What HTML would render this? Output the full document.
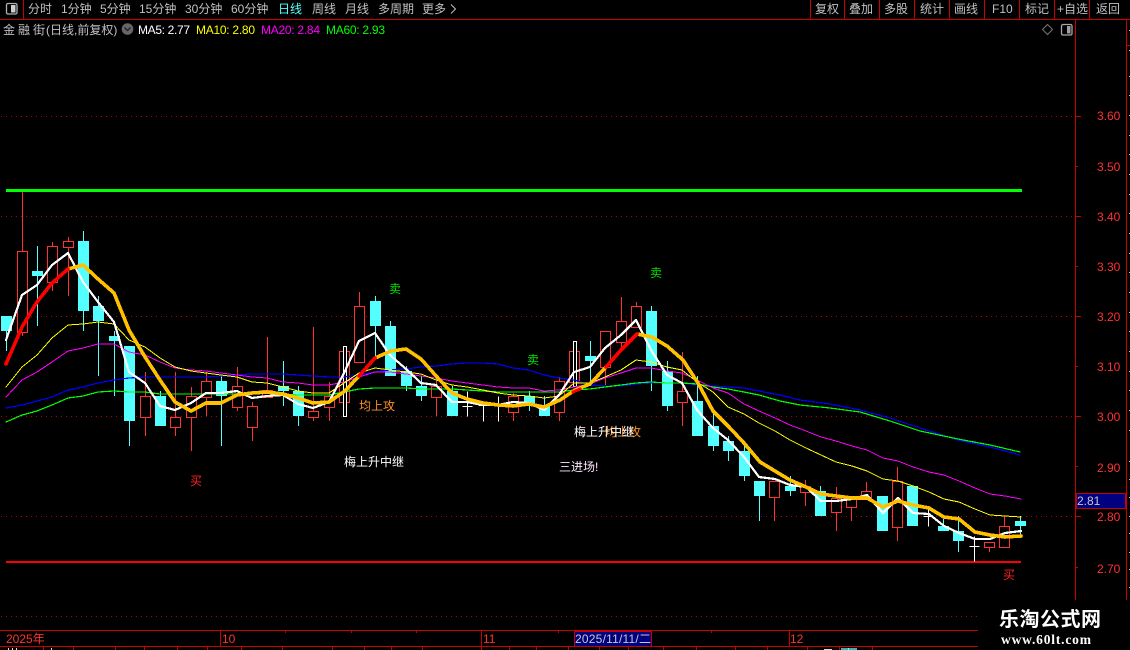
<!DOCTYPE html>
<html><head><meta charset="utf-8"><style>
html,body{margin:0;padding:0;background:#000;width:1130px;height:650px;overflow:hidden}
svg{display:block}
text{font-family:"Liberation Sans","WenQuanYi Zen Hei","Noto Sans CJK SC",sans-serif;font-size:12px}
.m{fill:#c0c0c0}
.a{fill:#ff3232}
</style></head><body>
<svg width="1130" height="650" viewBox="0 0 1130 650" xmlns="http://www.w3.org/2000/svg">
<rect width="1130" height="650" fill="#000"/>
<g shape-rendering="crispEdges">
<!-- grid -->
<g stroke="#b00000" stroke-width="1" stroke-dasharray="1 4" fill="none">
<path d="M1 116.5H1075M1 216.5H1075M1 316.5H1075M1 416.5H1075M1 516.5H1075M1 616.5H978"/>
</g>
<!-- frame -->
<g stroke="#c80000" stroke-width="1" fill="none">
<path d="M0 19.5H1130M23.5 0V19M810.5 0V19M844.5 0V19M879.5 0V19M914.5 0V19M949.5 0V19M984.5 0V19M1019.5 0V19M1054.5 0V19M1089.5 0V19"/>
<path d="M1075.5 20V600M1126.5 20V600M1126 45.5H1130"/>
<path d="M1076 116.5H1081M1076 166.5H1078M1076 216.5H1081M1076 266.5H1078M1076 316.5H1081M1076 366.5H1078M1076 416.5H1081M1076 466.5H1078M1076 516.5H1081M1076 567.5H1078"/>
<path d="M0 630.5H978M0 646.5H978M220.5 630V646M481.5 630V646M789.5 630V646M285.5 630V633M351.5 630V633M416.5 630V633M558.5 630V633M711.5 630V633"/>
<path d="M43.5 646V650M73.5 646V650M115.5 646V650M144.5 646V650M177.5 646V650M207.5 646V650M241.5 646V650M282.5 646V650M332.5 646V650M364.5 646V650M391.5 646V650M422.5 646V650M481.5 646V650M509.5 646V650M536.5 646V650M568.5 646V650M599.5 646V650M628.5 646V650M663.5 646V650M696.5 646V650M735.5 646V650M767.5 646V650M807.5 646V650M839.5 646V650M872.5 646V650"/>
</g>
<path d="M1129 30h1M1129 50h1M1129 76h1M1129 95h1M1129 115h1M1129 135h1M1129 154h1M1129 174h1M1129 194h1M1129 213h1M1129 233h1M1129 253h1M1129 272h1M1129 292h1M1129 312h1M1129 331h1M1129 351h1M1129 371h1M1129 390h1M1129 410h1M1129 430h1M1129 461h1M1129 479h1M1129 497h1M1129 516h1M1129 533h1M1129 552h1M1129 569h1M1129 587h1" stroke="#c0c0c0" stroke-width="1" transform="translate(0,.5)"/>
<path d="M8 648h1v2h-1zM12 648h1v2h-1zM16 648h1v2h-1zM51 648h1v2h-1zM824 649h8v1h-8zM848 648h1v2h-1z" fill="#ddd"/>
<path d="M841 648h16v2h-16z" fill="#54ffff" opacity=".7"/>

<!-- horizontal levels -->
<rect x="6" y="189" width="1016" height="3" fill="#00ff00"/>
<rect x="6" y="561" width="1015" height="2" fill="#ff0000"/>

<!-- red wicks -->
<path stroke="#ff3232" stroke-width="1" fill="none" transform="translate(.5,0)" d="M22 192V336M52 242V291M68 237V296M145 372V436M175 372V436M191 387V451M206 372V416M237 367V411M252 402V441M267 337V397M313 327V421M329 382V421M344 351V402M359 292V362M436 381V416M513 393V421M559 377V421M574 351V382M605 331V385M621 297V350M636 302V327M682 352V426M774 481V521M805 480V506M836 487V531M851 497V521M866 482V497M897 467V541M989 542V552M1004 516V547"/>
<!-- red bodies -->
<path stroke="#ff3232" stroke-width="1" fill="#000" transform="translate(.5,.5)" d="M17 251h10v81h-10zM47 246h10v36h-10zM63 241h10v6h-10zM140 396h10v21h-10zM170 417h10v10h-10zM186 396h10v21h-10zM201 381h10v16h-10zM232 386h10v21h-10zM247 406h10v21h-10zM262 390h10v7h-10zM308 411h10v6h-10zM324 396h10v11h-10zM339 351h10v51h-10zM354 306h10v56h-10zM431 386h10v11h-10zM508 396h10v16h-10zM554 381h10v31h-10zM569 351h10v31h-10zM600 331h10v36h-10zM616 321h10v21h-10zM631 306h10v21h-10zM677 391h10v11h-10zM769 481h10v16h-10zM800 486h10v6h-10zM831 498h10v14h-10zM846 497h10v10h-10zM861 491h10v6h-10zM892 481h10v46h-10zM984 542h10v5h-10zM999 526h10v21h-10z"/>
<!-- cyan wicks -->
<path stroke="#54ffff" stroke-width="1" fill="none" transform="translate(.5,0)" d="M6 316V351M37 246V326M83 231V331M98 296V376M114 331V396M129 346V446M160 391V426M221 376V446M283 361V406M298 386V426M375 296V357M390 321V376M406 366V391M421 376V401M452 386V416M529 391V411M544 396V416M590 341V386M651 306V391M667 361V411M697 376V436M713 411V451M728 436V461M744 441V481M759 481V521M790 476V496M820 486V516M943 519V531M958 516V552M1020 516V536"/>
<!-- cyan bodies -->
<path fill="#54ffff" d="M1 316h11v15h-11zM32 271h11v5h-11zM78 241h11v70h-11zM93 306h11v15h-11zM109 336h11v5h-11zM124 346h11v75h-11zM155 396h11v30h-11zM216 381h11v15h-11zM278 386h11v5h-11zM293 391h11v25h-11zM370 301h11v25h-11zM385 326h11v50h-11zM401 371h11v15h-11zM416 386h11v10h-11zM447 391h11v25h-11zM524 396h11v10h-11zM539 406h11v10h-11zM585 356h11v5h-11zM646 311h11v55h-11zM662 371h11v35h-11zM692 401h11v35h-11zM708 426h11v20h-11zM723 441h11v10h-11zM739 451h11v25h-11zM754 481h11v15h-11zM785 486h11v5h-11zM815 491h11v25h-11zM877 496h11v35h-11zM907 486h11v40h-11zM938 526h11v5h-11zM953 531h11v10h-11zM1015 521h11v5h-11z"/>
<!-- white doji -->
<path fill="#fff" d="M343 346h4v71h-4zM573 341h4v46h-4z"/>
<path fill="#000" d="M344 347h2v69h-2zM574 342h2v44h-2z"/>
<path stroke="#fff" stroke-width="1" fill="none" transform="translate(.5,.5)" d="M467 391V416M462 406H472M483 401V421M478 405H488M498 396V421M493 405H503M928 506V526M923 516H933M974 536V561M969 546H979"/>

<!-- moving averages -->
<g fill="none" stroke-linejoin="round" stroke-linecap="round">
<polyline stroke="#0000ff" stroke-width="1.2" points="6,408 22,405 37,401 52,397 68,390 83,387 98,383 114,380 129,378 145,377 160,377 175,377 191,377 206,377 221,376 237,375 252,374 283,374 298,375 313,376 329,377 344,377 359,375 375,372 390,370 406,369 421,367 436,366 452,364 467,363 483,363 498,364 513,368 529,370 544,375 559,378 574,380 590,385 605,386 621,386 636,384 651,383 667,383 682,383 697,385 713,386 728,387 744,388 759,391 780,395 800,400 830,404 860,410 890,418 920,428 958,440 990,447 1020,455"/>
<polyline stroke="#00ff00" stroke-width="1.2" points="6,422 22,415 37,411 52,405 68,398 83,396 98,392 114,391 129,392 145,392 160,394 175,394 191,394 206,394 221,394 237,394 252,393 283,394 298,395 313,395 329,395 344,392 359,389 375,388 390,388 406,388 421,389 436,389 452,389 467,390 483,391 498,392 513,392 529,392 559,392 574,390 590,389 605,387 621,385 636,383 651,382 667,383 682,383 697,384 713,387 728,389 744,392 759,395 780,401 800,405 830,408 860,412 890,421 920,431 958,439 990,445 1020,452"/>
<polyline stroke="#ff00ff" stroke-width="1" points="6,397 22,380 37,372 52,362 68,351 83,348 98,344 114,344 129,352 145,355 160,362 175,368 191,370 206,371 221,373 237,375 252,377 267,378 283,382 298,383 313,385 329,385 344,382 359,377 375,372 390,372 406,374 421,376 436,378 452,381 467,383 483,385 498,387 513,388 529,388 544,391 559,390 574,387 590,384 605,378 621,373 636,368 651,368 667,371 682,373 697,380 713,388 728,393 744,404 759,411 775,418 790,425 806,431 821,437 836,441 852,446 867,450 883,458 898,461 913,467 929,472 944,475 959,481 975,488 990,494 1005,496 1021,499"/>
<polyline stroke="#ffff00" stroke-width="1" points="6,387 22,367 37,355 52,338 68,325 83,324 98,322 114,324 129,340 145,347 160,358 175,367 191,371 206,373 221,375 237,377 252,382 267,383 283,387 298,391 313,393 329,393 344,383 359,373 375,368 390,370 406,372 421,374 436,380 452,385 467,387 483,390 498,393 513,395 529,396 544,398 559,396 574,383 590,383 605,377 621,370 636,360 651,362 667,367 682,370 697,382 713,392 728,407 744,414 759,423 775,431 790,440 806,448 821,455 836,462 852,466 867,471 883,479 898,481 913,486 929,492 944,499 959,502 975,509 990,515 1005,516 1021,517"/>
<polyline stroke="#ffffff" stroke-width="2.2" points="6,340 22,295 37,285 52,265 68,253 83,282 98,302 114,322 129,372 145,383 160,406 175,410 191,403 206,393 221,393 237,391 252,398 267,396 283,395 298,404 313,408 329,402 344,373 359,341 375,333 390,355 406,369 421,383 436,385 452,402 467,402 483,405 498,405 513,402 529,403 544,410 559,395 574,372 590,367 605,348 621,335 636,320 651,350 667,375 682,383 697,410 713,428 728,440 744,457 759,477 775,479 790,485 806,487 821,501 836,501 852,499 867,495 883,513 898,498 913,513 929,514 944,526 959,533 975,539 990,539 1005,533 1021,531"/>
<polyline stroke="#ffc000" stroke-width="3.6" points="68,269 83,265 98,279 114,293 129,330 145,357 160,380 175,402 191,411 206,403 221,403 237,395 252,393 267,392 283,394 298,398 313,403 329,402 345,391 359,376 375,358 391,351 406,349 421,359 437,377 452,393 467,399 483,403 498,405 513,406 529,404 544,407 560,400 575,390 590,384 606,367 621,350 637,334 652,337 667,346 683,360 698,383 713,411 729,427 744,443 760,462 775,471 790,480 806,487 821,494 836,496 852,498 867,498 883,507 898,501 913,505 929,508 944,517 959,519 975,532 990,535 1005,537 1021,536"/>
<polyline stroke="#ff0000" stroke-width="3.6" points="6,364 22,327 37,302 52,283 68,269"/>
<polyline stroke="#ff0000" stroke-width="3.6" points="359,376 375,358"/>
<polyline stroke="#ff0000" stroke-width="3.6" points="606,367 621,350 637,334"/>
<polyline stroke="#ff0000" stroke-width="3" points="573,392 580,389"/>
</g>

<!-- date box + price box -->
<rect x="574.5" y="631.5" width="77" height="15" fill="#000080" stroke="#c80000"/>
<rect x="1076.5" y="493.5" width="49" height="15" fill="#000080" stroke="#c80000"/>
<!-- watermark area -->
<rect x="978" y="600" width="152" height="50" fill="#000"/>
</g>

<!-- top icons -->
<rect x="6.5" y="3.5" width="10.5" height="10.5" rx="1.5" fill="#000" stroke="#b0b0b0" stroke-width="1.3"/>
<rect x="11" y="5" width="4.5" height="7.5" fill="#d0d0d0"/>
<rect x="1061.5" y="24.5" width="10.5" height="10.5" rx="1.5" fill="#000" stroke="#a8a8a8" stroke-width="1.3"/>
<rect x="1067" y="26" width="3.5" height="7.5" fill="#a0a0a0"/>
<path d="M1047.5 24.5l5 5-5 5-5-5z" fill="none" stroke="#777"/>
<circle cx="127.5" cy="29" r="5.8" fill="#666"/>
<path d="M124.5 27.5l3 3 3-3" fill="none" stroke="#222" stroke-width="1.4"/>

<!-- top menu -->
<g class="m">
<text class="m" x="28" y="13">分时</text>
<text class="m" x="61" y="13">1分钟</text>
<text class="m" x="100" y="13">5分钟</text>
<text class="m" x="139" y="13">15分钟</text>
<text class="m" x="185" y="13">30分钟</text>
<text class="m" x="231" y="13">60分钟</text>
<text x="278" y="13" fill="#54ffff">日线</text>
<text class="m" x="312" y="13">周线</text>
<text class="m" x="345" y="13">月线</text>
<text class="m" x="378" y="13">多周期</text>
<text class="m" x="422" y="13">更多</text>
<text class="m" x="815" y="13">复权</text>
<text class="m" x="849" y="13">叠加</text>
<text class="m" x="884" y="13">多股</text>
<text class="m" x="920" y="13">统计</text>
<text class="m" x="954" y="13">画线</text>
<text class="m" x="992" y="13">F10</text>
<text class="m" x="1025" y="13">标记</text>
<text class="m" x="1057" y="13">+自选</text>
<text class="m" x="1096" y="13">返回</text>
</g>
<path d="M451 4.5l4.5 4.5-4.5 4.5" fill="none" stroke="#c0c0c0"/>

<!-- title -->
<text class="m" x="3" y="34">金</text>
<text class="m" x="18" y="34">融</text>
<text class="m" x="33" y="34">街</text>
<text class="m" x="46" y="34">(日线,前复权)</text>
<text x="138" y="34" fill="#fff" textLength="52">MA5: 2.77</text>
<text x="196" y="34" fill="#ffff00" textLength="59">MA10: 2.80</text>
<text x="261" y="34" fill="#ff00ff" textLength="59">MA20: 2.84</text>
<text x="326" y="34" fill="#00ff00" textLength="59">MA60: 2.93</text>

<!-- price axis -->
<text class="a" x="1097" y="120">3.60</text>
<text class="a" x="1097" y="171">3.50</text>
<text class="a" x="1097" y="221">3.40</text>
<text class="a" x="1097" y="271">3.30</text>
<text class="a" x="1097" y="321">3.20</text>
<text class="a" x="1097" y="371">3.10</text>
<text class="a" x="1097" y="421">3.00</text>
<text class="a" x="1097" y="472">2.90</text>
<text class="a" x="1097" y="521">2.80</text>
<text class="a" x="1097" y="573">2.70</text>
<text x="1077" y="505" fill="#c8c8c8">2.81</text>

<!-- chart labels -->
<text x="190" y="485" fill="#ff2020">买</text>
<text x="389" y="293" fill="#00e000">卖</text>
<text x="527" y="364" fill="#00e000">卖</text>
<text x="650" y="277" fill="#00e000">卖</text>
<text x="1003" y="579" fill="#ff2020">买</text>
<text x="359" y="410" fill="#ff9020">均上攻</text>
<text x="344" y="466" fill="#fff">梅上升中继</text>
<text x="605" y="436" fill="#ff9020">均上攻</text>
<text x="574" y="436" fill="#fff">梅上升中继</text>
<text x="559" y="471" fill="#ffe6ff">三进场!</text>

<!-- time axis -->
<text class="a" x="6" y="643">2025年</text>
<text class="a" x="222" y="643">10</text>
<text class="a" x="483" y="643">11</text>
<text class="a" x="790" y="643">12</text>
<text x="575" y="643" fill="#c8c8c8" textLength="76">2025/11/11/二</text>

<!-- watermark -->
<text x="999" y="626" fill="#fff" style="font-size:20px;font-weight:bold;letter-spacing:.5px;font-family:'Noto Sans CJK SC','WenQuanYi Zen Hei',sans-serif">乐淘公式网</text>
<text x="1001" y="644" fill="#fff" style="font-size:13.5px;font-weight:bold;font-family:'Liberation Serif',serif" textLength="90">www.60lt.com</text>
</svg>
</body></html>
